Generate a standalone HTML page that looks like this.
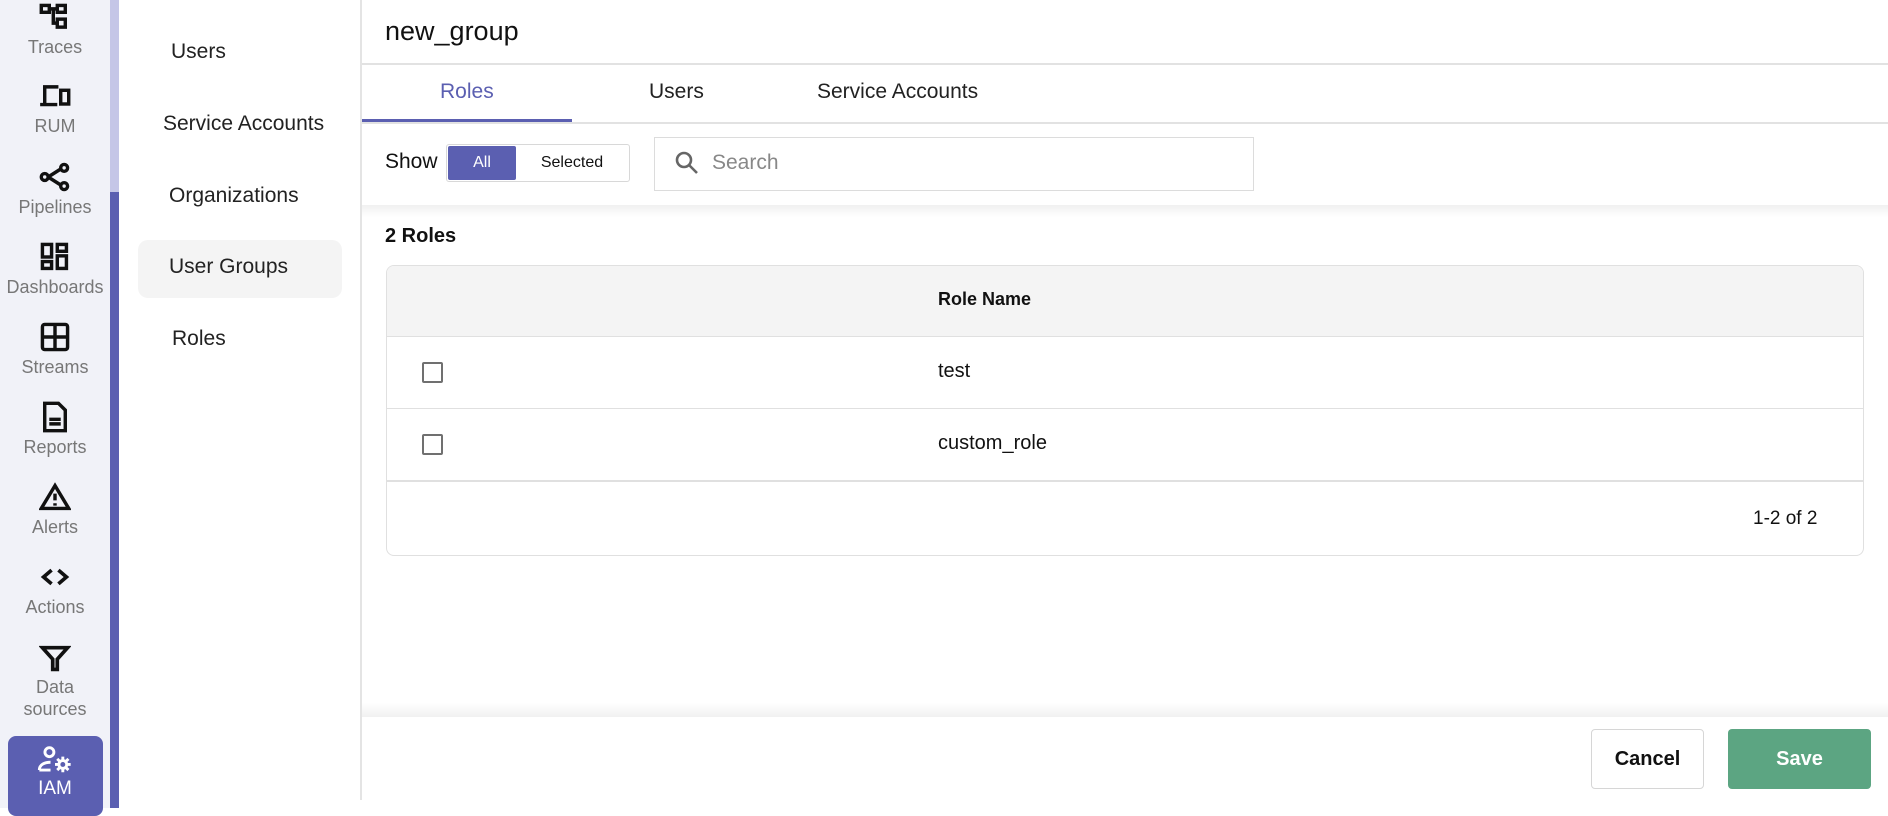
<!DOCTYPE html>
<html><head><meta charset="utf-8"><style>
*{box-sizing:border-box;margin:0;padding:0}
body{width:1888px;height:808px;overflow:hidden;background:#fff;font-family:"Liberation Sans",sans-serif;position:relative;color:#111}
.abs{position:absolute}
#rail{left:0;top:0;width:110px;height:808px;background:#f1f2f8}
.lbl{position:absolute;left:0;width:110px;text-align:center;font-size:18px;color:#777;line-height:20px}
.ic{position:absolute;left:39px;width:32px;height:32px}
.sub{position:absolute;font-size:21px;color:#222}
.tab{position:absolute;top:80px;font-size:21px;color:#222}
</style></head><body>
<div id="rail" class="abs"></div>
<div class="abs" style="left:110px;top:0;width:9px;height:192px;background:#c5c6e7"></div>
<div class="abs" style="left:110px;top:192px;width:9px;height:616px;background:#5b5fb1"></div>

<svg class="ic" style="top:2px" viewBox="0 0 28 28" fill="none" stroke="#111" stroke-width="3"><rect x="2" y="3" width="7" height="6"/><rect x="16" y="3" width="7" height="6"/><rect x="16" y="15" width="7" height="7"/><path d="M9 6h7M12.5 6v12.5H16"/></svg>
<div class="lbl" style="top:37px">Traces</div>
<svg class="ic" style="top:80px" viewBox="0 0 28 28" fill="none" stroke="#111" stroke-width="3"><path d="M5 20V6h12M1 21.5h15"/><rect x="19" y="9" width="7" height="12"/></svg>
<div class="lbl" style="top:116px">RUM</div>
<svg class="ic" style="top:161px" viewBox="0 0 28 28" fill="none" stroke="#111" stroke-width="3"><circle cx="5" cy="14" r="3"/><circle cx="22" cy="6" r="3"/><circle cx="22" cy="22" r="3"/><path d="M8 14l11-7M8 14l11 7"/></svg>
<div class="lbl" style="top:197px">Pipelines</div>
<svg class="ic" style="top:241px" viewBox="0 0 28 28" fill="none" stroke="#111" stroke-width="3"><rect x="3" y="3" width="8" height="11"/><rect x="3" y="18" width="8" height="6"/><rect x="16" y="3" width="8" height="6"/><rect x="16" y="13" width="8" height="11"/></svg>
<div class="lbl" style="top:277px">Dashboards</div>
<svg class="ic" style="top:321px" viewBox="0 0 28 28" fill="none" stroke="#111" stroke-width="3"><rect x="3" y="3" width="22" height="22" rx="2"/><path d="M14 3v22M3 14h22"/></svg>
<div class="lbl" style="top:357px">Streams</div>
<svg class="ic" style="top:401px" viewBox="0 0 28 28" fill="none" stroke="#111" stroke-width="3"><path d="M5 2h12l6 6v18H5z"/><path d="M9 16h10M9 20h10"/></svg>
<div class="lbl" style="top:437px">Reports</div>
<svg class="ic" style="top:481px" viewBox="0 0 28 28" fill="none" stroke="#111" stroke-width="3"><path d="M14 4L2 24h24z"/><path d="M14 11v6M14 19.5v2"/></svg>
<div class="lbl" style="top:517px">Alerts</div>
<svg class="ic" style="top:561px" viewBox="0 0 28 28" fill="none" stroke="#111" stroke-width="3.2"><path d="M11 8l-7 6 7 6M17 8l7 6-7 6"/></svg>
<div class="lbl" style="top:597px">Actions</div>
<svg class="ic" style="top:642px" viewBox="0 0 28 28" fill="none" stroke="#111" stroke-width="3.2"><path d="M3 5h22l-9 10v9h-4v-9z"/></svg>
<div class="lbl" style="top:677px">Data</div>
<div class="lbl" style="top:699px">sources</div>
<div class="abs" style="left:8px;top:736px;width:95px;height:80px;background:#5b5fb1;border-radius:8px"></div>
<svg class="ic" style="top:744px;left:36px;width:38px;height:32px" viewBox="0 0 34 28" fill="none" stroke="#fff" stroke-width="2.6"><circle cx="12" cy="7" r="4"/><path d="M3 23c0-5 5-7 10-7M3 23h10"/><circle cx="24" cy="18" r="3.5"/><path d="M24 11v3M24 22v3M17 18h3M28 18h3M19 13l2 2M27 21l2 2M29 13l-2 2M21 21l-2 2"/></svg>
<div class="lbl" style="top:779px;color:#fff;font-size:19px">IAM</div>

<div class="abs" style="left:360px;top:0;width:2px;height:800px;background:#e4e4e4"></div>
<div class="abs" style="left:138px;top:240px;width:204px;height:58px;background:#f4f4f4;border-radius:10px"></div>
<div class="sub" style="left:171px;top:40px">Users</div>
<div class="sub" style="left:163px;top:112px">Service Accounts</div>
<div class="sub" style="left:169px;top:184px">Organizations</div>
<div class="sub" style="left:169px;top:255px">User Groups</div>
<div class="sub" style="left:172px;top:327px">Roles</div>

<div class="abs" style="left:385px;top:16px;font-size:27px">new_group</div>
<div class="abs" style="left:362px;top:63px;width:1526px;height:2px;background:#e2e2e2"></div>
<div class="tab" style="left:440px;color:#5b5fb1">Roles</div>
<div class="tab" style="left:649px">Users</div>
<div class="tab" style="left:817px">Service Accounts</div>
<div class="abs" style="left:362px;top:119px;width:210px;height:3px;background:#5b5fb1"></div>
<div class="abs" style="left:362px;top:122px;width:1526px;height:2px;background:#e2e2e2"></div>

<div class="abs" style="left:385px;top:150px;font-size:21px">Show</div>
<div class="abs" style="left:446px;top:144px;width:184px;height:38px;border:1px solid #d8d8d8;border-radius:3px"></div>
<div class="abs" style="left:448px;top:146px;width:68px;height:34px;background:#5b5fb1;border-radius:2px;color:#fff;font-size:16px;text-align:center;line-height:34px">All</div>
<div class="abs" style="left:516px;top:146px;width:112px;height:34px;font-size:16px;text-align:center;line-height:34px">Selected</div>
<div class="abs" style="left:654px;top:137px;width:600px;height:54px;border:1px solid #dcdcdc"></div>
<svg class="abs" style="left:674px;top:150px" width="26" height="26" viewBox="0 0 26 26" fill="none" stroke="#666" stroke-width="2.6"><circle cx="10" cy="10" r="7"/><path d="M15 15l8 8"/></svg>
<div class="abs" style="left:712px;top:151px;font-size:21px;color:#888">Search</div>
<div class="abs" style="left:362px;top:205px;width:1526px;height:12px;background:linear-gradient(#f0f0f0,#fff)"></div>

<div class="abs" style="left:385px;top:225px;font-size:20px;font-weight:bold">2 Roles</div>
<div class="abs" style="left:386px;top:265px;width:1478px;height:291px;border:1px solid #e0e0e0;border-radius:8px;overflow:hidden">
 <div style="height:71px;background:#f4f4f4;border-bottom:1px solid #e0e0e0"></div>
 <div style="height:72px;border-bottom:1px solid #e0e0e0"></div>
 <div style="height:73px;border-bottom:2px solid #e0e0e0"></div>
</div>
<div class="abs" style="left:938px;top:289px;font-size:18px;font-weight:bold">Role Name</div>
<div class="abs" style="left:422px;top:362px;width:21px;height:21px;border:2.5px solid #707070;border-radius:2px"></div>
<div class="abs" style="left:938px;top:360px;font-size:20px">test</div>
<div class="abs" style="left:422px;top:434px;width:21px;height:21px;border:2.5px solid #707070;border-radius:2px"></div>
<div class="abs" style="left:938px;top:432px;font-size:20px">custom_role</div>
<div class="abs" style="left:1753px;top:508px;font-size:19px">1-2 of 2</div>

<div class="abs" style="left:362px;top:703px;width:1526px;height:14px;background:linear-gradient(#fff,#f1f1f1)"></div>
<div class="abs" style="left:1591px;top:729px;width:113px;height:60px;border:1px solid #d6d6d6;border-radius:4px;text-align:center;line-height:58px;font-size:20px;font-weight:bold">Cancel</div>
<div class="abs" style="left:1728px;top:729px;width:143px;height:60px;background:#5ca582;border-radius:4px;text-align:center;line-height:60px;font-size:20px;font-weight:bold;color:#fff">Save</div>
</body></html>
